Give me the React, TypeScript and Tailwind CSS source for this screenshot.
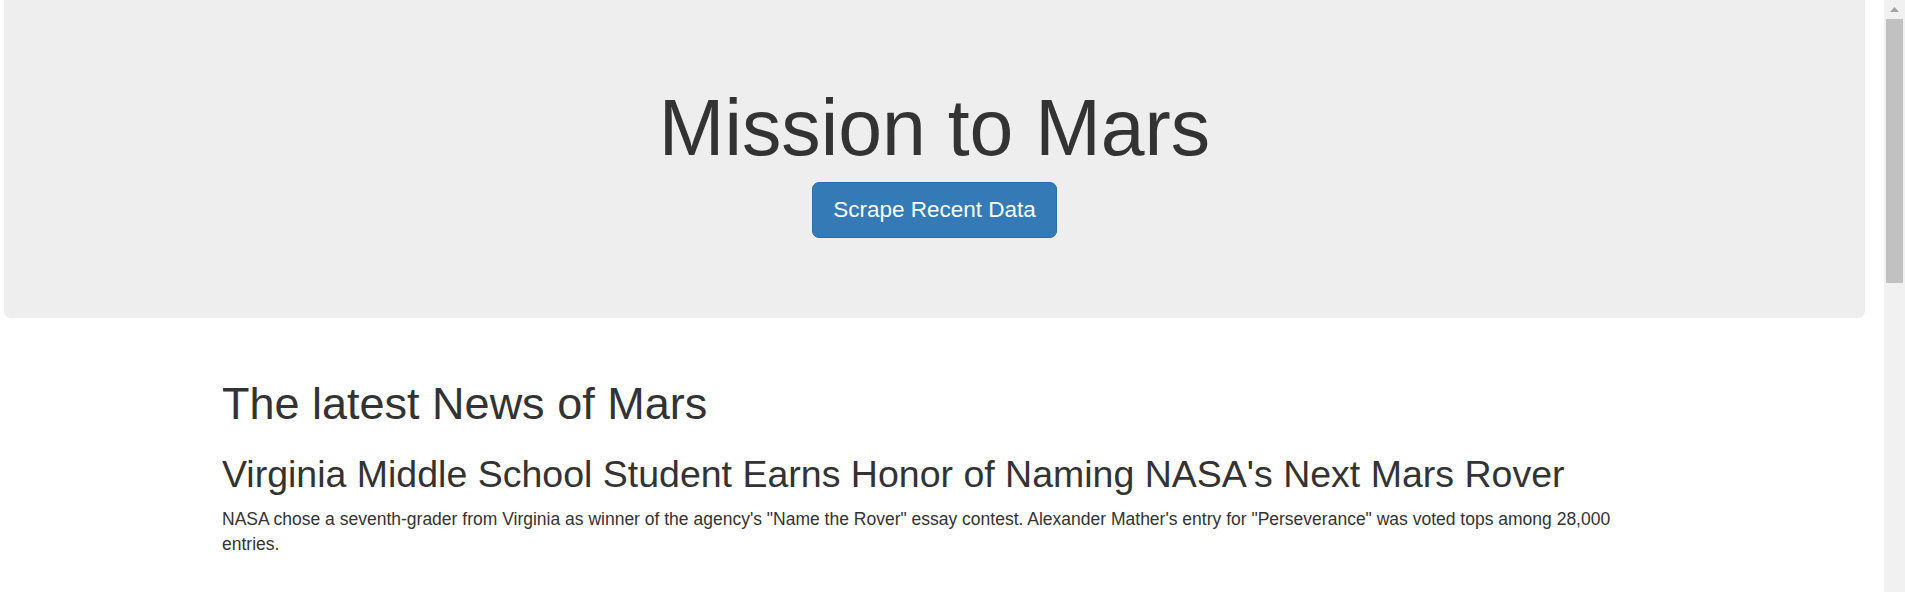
const Scrollbar = () => {
  return (
    <div className="flex w-[21px] shrink-0 flex-col items-center bg-[#f1f1f1]">
      <div className="flex h-[19px] w-full items-center justify-center">
        <svg width="9" height="5" viewBox="0 0 9 5">
          <polygon points="4.5,0 9,5 0,5" fill="#a3a3a3" />
        </svg>
      </div>
      <div className="h-[264px] w-[17px] bg-[#c1c1c1]" />
    </div>
  );
};

export default function App() {
  return (
    <div className="flex h-[592px] w-full overflow-hidden bg-white font-['Liberation_Sans',Arial,sans-serif] text-[#333]">
      <div className="min-w-0 flex-1">
        {/* Jumbotron */}
        <div className="ml-[4px] mr-[19px] flex flex-col items-center rounded-b-[7px] bg-[#eee] pt-[85px] pb-[80px]">
          <h1 className="text-[78.75px] leading-[1.1]">Mission to Mars</h1>
          <button className="mt-[10px] rounded-[7px] border border-[#2e6da4] bg-[#337ab7] px-5 py-3 text-[22.5px] leading-[30px] text-white">
            Scrape Recent Data
          </button>
        </div>

        {/* News */}
        <div className="ml-[222px] w-[1444px] pt-[61px]">
          <h1 className="text-[45px] leading-[1.1]">The latest News of Mars</h1>
          <h2 className="mt-[26px] text-[37.5px] leading-[1.1]">
            Virginia Middle School Student Earns Honor of Naming NASA's Next Mars Rover
          </h2>
          <p className="mt-[12px] text-[17.5px] leading-[25px]">
            NASA chose a seventh-grader from Virginia as winner of the agency's "Name the Rover" essay contest. Alexander Mather's entry for "Perseverance" was voted tops among 28,000 entries.
          </p>
        </div>
      </div>
      <Scrollbar />
    </div>
  );
}
